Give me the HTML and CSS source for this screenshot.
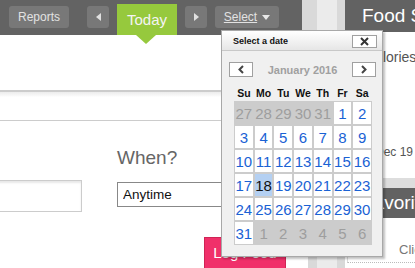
FILE: index.html
```html
<!DOCTYPE html>
<html lang="en">

<head>
    <meta charset="UTF-8">
    <meta name="viewport" content="width=device-width, initial-scale=1.0">
    <title>Food Log</title>
    <link rel="stylesheet" href="styles.css">
</head>

<body>
    <div class="page">
        <div class="main">
            <div class="topbar">
                <a class="btn reports">Reports</a>
                <a class="btn arrow"><span class="tri-left"></span></a>
                <a class="today">Today</a>
                <a class="btn arrow"><span class="tri-right"></span></a>
                <a class="btn select"><span class="select-label">Select</span><span class="tri-down"></span></a>
            </div>

            <div class="band"></div>

            <div class="form-row">
                <div class="field-left">
                    <input type="text" class="txt-left">
                </div>
                <div class="field-when">
                    <label for="when">When?</label>
                    <input type="text" id="when" class="txt-when" value="Anytime">
                </div>
            </div>

            <div class="actions">
                <button class="log-btn">Log Food</button>
            </div>
        </div>

        <div class="gutter"></div>

        <div class="side">
            <div class="side-head">Food Summary</div>
            <div class="side-cal">Calories</div>
            <div class="side-date">Dec 19</div>
            <div class="side-strip"></div>
            <div class="side-head fav">Favorites</div>
            <div class="side-box">Click a food</div>
        </div>

        <!-- date picker popup -->
        <div class="datepicker">
            <div class="dp-title">
                <span>Select a date</span>
                <a class="dp-close">
                    <svg width="23" height="11" viewBox="0 0 23 11">
                        <path d="M8 2 L15 9 M15 2 L8 9" stroke="#333" stroke-width="2" fill="none" />
                    </svg>
                </a>
            </div>
            <div class="dp-nav">
                <a class="dp-navbtn">
                    <svg width="22" height="13" viewBox="0 0 22 13">
                        <path d="M13 3 L9.5 6.5 L13 10" stroke="#444" stroke-width="2" fill="none" />
                    </svg>
                </a>
                <span class="dp-month">January 2016</span>
                <a class="dp-navbtn">
                    <svg width="22" height="13" viewBox="0 0 22 13">
                        <path d="M9 3 L12.5 6.5 L9 10" stroke="#444" stroke-width="2" fill="none" />
                    </svg>
                </a>
            </div>
            <div class="dp-days">
                <span>Su</span><span>Mo</span><span>Tu</span><span>We</span><span>Th</span><span>Fr</span><span>Sa</span>
            </div>
            <div class="dp-grid" id="dpGrid"></div>
        </div>
    </div>

    <script>
        // January 2016 のカレンダーを作る
        const grid = document.getElementById('dpGrid');
        const cells = [];
        [27, 28, 29, 30, 31].forEach(d => cells.push({ d: d, other: true }));
        for (let d = 1; d <= 31; d++) cells.push({ d: d, other: false });
        [1, 2, 3, 4, 5, 6].forEach(d => cells.push({ d: d, other: true }));

        cells.forEach(c => {
            const el = document.createElement('span');
            el.className = 'dp-cell';
            if (c.other) el.classList.add('other');
            if (!c.other && c.d === 18) el.classList.add('selected');
            el.textContent = c.d;
            grid.appendChild(el);
        });
    </script>
</body>

</html>
```

FILE: styles.css
```css
body {
    margin: 0;
    font-family: "Liberation Sans", Arial, sans-serif;
    background-color: #ffffff;
    color: #333;
    width: 415px;
    height: 268px;
    overflow: hidden;
}

.page {
    display: flex;
    position: relative;
    height: 268px;
}

/* main column */
.main {
    width: 308px;
    flex-shrink: 0;
}

.topbar {
    display: flex;
    align-items: flex-start;
    height: 35px;
    padding: 6px 0 0 9px;
    box-sizing: border-box;
    background-color: #636363;
    border-right: 6px solid #d9d9d9;
}

.btn {
    display: flex;
    align-items: center;
    justify-content: center;
    height: 22px;
    background-color: #787878;
    border-radius: 3px;
    color: #e2e2e2;
    font-size: 12px;
}

.reports {
    width: 60px;
    margin-right: 18px;
}

.arrow {
    width: 22px;
}

.tri-left {
    border-right: 5px solid #e0e0e0;
    border-top: 4px solid transparent;
    border-bottom: 4px solid transparent;
}

.tri-right {
    border-left: 5px solid #e0e0e0;
    border-top: 4px solid transparent;
    border-bottom: 4px solid transparent;
}

.today {
    position: relative;
    display: flex;
    align-items: center;
    justify-content: center;
    width: 60px;
    height: 31px;
    margin: -2px 8px 0 8px;
    background-color: #96c93d;
    color: #f4f4f4;
    font-size: 15px;
}

.today::after {
    content: "";
    position: absolute;
    top: 100%;
    left: 19px;
    border-top: 9px solid #96c93d;
    border-left: 10px solid transparent;
    border-right: 10px solid transparent;
}

.select {
    width: 64px;
    margin-left: 8px;
    gap: 5px;
}

.select-label {
    text-decoration: underline;
}

.tri-down {
    border-top: 5px solid #e8e8e8;
    border-left: 4.5px solid transparent;
    border-right: 4.5px solid transparent;
}

.band {
    margin-top: 55px;
    height: 28px;
    border-top: 2px solid #cccccc;
    border-bottom: 1px solid #cccccc;
    background: linear-gradient(#ececec 0, #f6f6f6 3px, #ffffff 5px);
}

.form-row {
    display: flex;
    align-items: flex-start;
    margin-top: 26px;
}

.field-left {
    margin-left: -20px;
    margin-top: 33px;
}

.txt-left {
    display: block;
    width: 102px;
    height: 32px;
    box-sizing: border-box;
    border: 1px solid #cccccc;
    box-shadow: inset 0 2px 2px #e8e8e8;
    margin: 0;
}

.field-when {
    margin-left: 35px;
}

.field-when label {
    display: block;
    font-size: 19px;
    line-height: 22px;
    color: #666666;
}

.txt-when {
    display: block;
    margin: 13px 0 0 0;
    width: 160px;
    height: 25px;
    box-sizing: border-box;
    border: 1px solid #888888;
    padding: 0 5px;
    font-family: "Liberation Sans", Arial, sans-serif;
    font-size: 13.5px;
    color: #111;
}

.actions {
    margin-top: 25px;
    padding-left: 204px;
}

.log-btn {
    width: 82px;
    height: 36px;
    padding: 0 0 6px 0;
    border: 1px solid #cf2455;
    background-color: #f0306a;
    color: #ffffff;
    font-family: "Liberation Sans", Arial, sans-serif;
    font-size: 15px;
}

/* splitter between columns */
.gutter {
    width: 20px;
    flex-shrink: 0;
    background-color: #ebebeb;
    border-left: 9px solid #d9d9d9;
    border-right: 8px solid #d9d9d9;
}

/* right column */
.side {
    width: 70px;
    flex-shrink: 0;
    overflow: hidden;
    white-space: nowrap;
}

.side-head {
    height: 32px;
    line-height: 32px;
    padding-left: 17px;
    background-color: #626262;
    color: #ffffff;
    font-size: 19px;
}

.side-cal {
    margin-top: 17px;
    padding-left: 20px;
    font-size: 14px;
    line-height: 16px;
    color: #555;
}

.side-date {
    margin-top: 80px;
    padding-left: 30px;
    font-size: 12px;
    line-height: 14px;
    color: #555;
}

.side-strip {
    margin-top: 19px;
    height: 10px;
    background-color: #dddddd;
}

.fav {
    height: 30px;
    line-height: 30px;
}

.side-box {
    margin-left: 2px;
    padding: 24px 0 4px 51px;
    font-size: 13px;
    line-height: 16px;
    color: #777;
    border-left: 1px solid #dddddd;
    border-bottom: 1px dotted #bbbbbb;
}

/* date picker */
.datepicker {
    position: absolute;
    left: 221px;
    top: 30px;
    width: 162px;
    height: 227px;
    box-sizing: border-box;
    border: 1px solid #a8a8a8;
    background-color: #f0f0f0;
    box-shadow: 2px 2px 2px rgba(0, 0, 0, 0.25);
}

.dp-title {
    display: flex;
    align-items: center;
    justify-content: space-between;
    height: 19px;
    padding: 0 5px 0 11px;
    background: linear-gradient(#ffffff, #e6e6e6);
    border-bottom: 1px solid #c8c8c8;
    font-size: 9px;
    font-weight: bold;
    color: #111;
}

.dp-close {
    display: flex;
    margin-top: 2px;
    width: 23px;
    height: 11px;
    border: 1px solid #a0a0a0;
    background-color: #ffffff;
}

.dp-nav {
    display: flex;
    align-items: center;
    justify-content: space-between;
    margin-top: 11px;
    padding: 0 6px 0 7px;
}

.dp-navbtn {
    display: flex;
    width: 22px;
    height: 13px;
    border: 1px solid #a0a0a0;
    background-color: #ffffff;
}

.dp-month {
    font-size: 11px;
    font-weight: bold;
    color: #a0a0a0;
}

.dp-days {
    display: grid;
    grid-template-columns: repeat(7, 1fr);
    gap: 2px;
    width: 138px;
    box-sizing: border-box;
    padding: 0 1px;
    margin: 10px 0 0 12px;
    font-size: 10.5px;
    line-height: 12px;
    font-weight: bold;
    text-align: center;
    color: #111;
}

.dp-grid {
    display: grid;
    grid-template-columns: repeat(7, 1fr);
    grid-auto-rows: 22px;
    gap: 2px;
    width: 138px;
    box-sizing: border-box;
    padding: 1px;
    margin: 2px 0 0 12px;
    background-color: #cccccc;
}

.dp-cell {
    display: flex;
    align-items: center;
    justify-content: center;
    background-color: #ffffff;
    color: #1a62d4;
    font-size: 15px;
}

.dp-cell.other {
    background-color: transparent;
    color: #9e9e9e;
}

.dp-cell.selected {
    background-color: #b4d0f2;
    color: #111;
}
```
